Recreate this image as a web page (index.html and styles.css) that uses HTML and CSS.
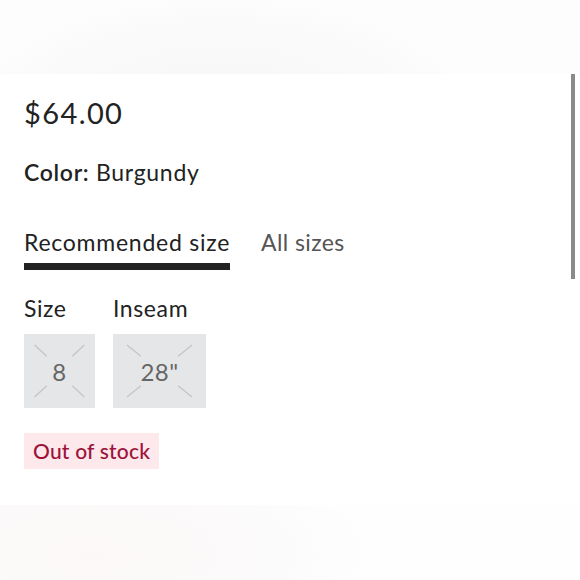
FILE: index.html
```html
<!DOCTYPE html>
<html>
<head>
<meta charset="utf-8">
<link rel="stylesheet" href="styles.css">
</head>
<body>
<div class="page">
  <div class="band-top"></div>
  <main class="content">
    <div class="price">$64.00</div>
    <div class="color"><span class="label">Color:</span> Burgundy</div>
    <div class="tabs">
      <div class="tab active">Recommended size</div>
      <div class="tab">All sizes</div>
    </div>
    <div class="options">
      <div class="option">
        <div class="opt-label">Size</div>
        <div class="swatch s-size">
          <svg class="cross" width="100%" height="100%">
            <line x1="15%" y1="15%" x2="32%" y2="30%"/>
            <line x1="85%" y1="15%" x2="68%" y2="30%"/>
            <line x1="15%" y1="85%" x2="32%" y2="70%"/>
            <line x1="85%" y1="85%" x2="68%" y2="70%"/>
          </svg>
          <span class="val">8</span>
        </div>
      </div>
      <div class="option">
        <div class="opt-label">Inseam</div>
        <div class="swatch s-inseam">
          <svg class="cross" width="100%" height="100%">
            <line x1="15%" y1="15%" x2="30%" y2="30%"/>
            <line x1="85%" y1="15%" x2="70%" y2="30%"/>
            <line x1="15%" y1="85%" x2="30%" y2="70%"/>
            <line x1="85%" y1="85%" x2="70%" y2="70%"/>
          </svg>
          <span class="val">28"</span>
        </div>
      </div>
    </div>
    <div class="badge">Out of stock</div>
  </main>
  <div class="band-bottom"></div>
  <div class="scrollbar"></div>
</div>
</body>
</html>
```
FILE: styles.css
```css
html, body {
  margin: 0;
  padding: 0;
  background: #ffffff;
}
body {
  font-family: Lato, "Open Sans", sans-serif;
  color: #222222;
}
.page {
  position: relative;
  width: 580px;
  height: 580px;
  overflow: hidden;
  display: flex;
  flex-direction: column;
}
.band-top {
  height: 74px;
  flex: none;
  background: radial-gradient(ellipse 260px 120px at 220px 110px, #f6f6f7, #fafafa 70%, #fdfdfd);
}
.content {
  flex: 1;
  padding: 21px 0 0 24px;
  display: flex;
  flex-direction: column;
  align-items: flex-start;
}
.price {
  font-size: 29px;
  line-height: 36px;
  letter-spacing: 1.4px;
  color: #222;
}
.color {
  margin-top: 27px;
  font-size: 23px;
  line-height: 28px;
  letter-spacing: 0.7px;
  color: #222;
}
.color .label {
  font-weight: 600;
}
.tabs {
  margin-top: 42px;
  display: flex;
  gap: 31px;
}
.tab {
  font-size: 23px;
  line-height: 28px;
  letter-spacing: 0.75px;
  color: #555;
  padding-bottom: 7px;
  border-bottom: 7px solid transparent;
}
.tab + .tab {
  letter-spacing: 0.4px;
}
.tab.active {
  color: #222;
  border-bottom-color: #222;
}
.options {
  margin-top: 24px;
  display: flex;
  gap: 18px;
}
.opt-label {
  font-size: 23px;
  line-height: 28px;
  letter-spacing: 0.6px;
  color: #222;
}
.swatch {
  position: relative;
  margin-top: 12px;
  height: 74px;
  background: #e5e6e8;
  display: flex;
  align-items: center;
  justify-content: center;
}
.s-size { width: 71px; }
.s-inseam { width: 93px; }
.cross {
  position: absolute;
  inset: 0;
}
.cross line {
  stroke: #c4c5c8;
  stroke-width: 1.3;
}
.val {
  position: relative;
  font-size: 24px;
  letter-spacing: 0.5px;
  color: #666;
}
.badge {
  margin-top: 25px;
  background: #fde8ec;
  color: #9e1239;
  font-size: 21px;
  font-weight: 500;
  line-height: 36px;
  letter-spacing: 0.2px;
  padding: 0 9px;
}
.band-bottom {
  height: 75px;
  flex: none;
  background: radial-gradient(ellipse 280px 120px at 90px 50px, #fbf8f7, #fcfbfb 70%, #fefefe);
}
.scrollbar {
  position: absolute;
  left: 571px;
  top: 74px;
  width: 4px;
  height: 205px;
  background: #8a8a8a;
}
```
